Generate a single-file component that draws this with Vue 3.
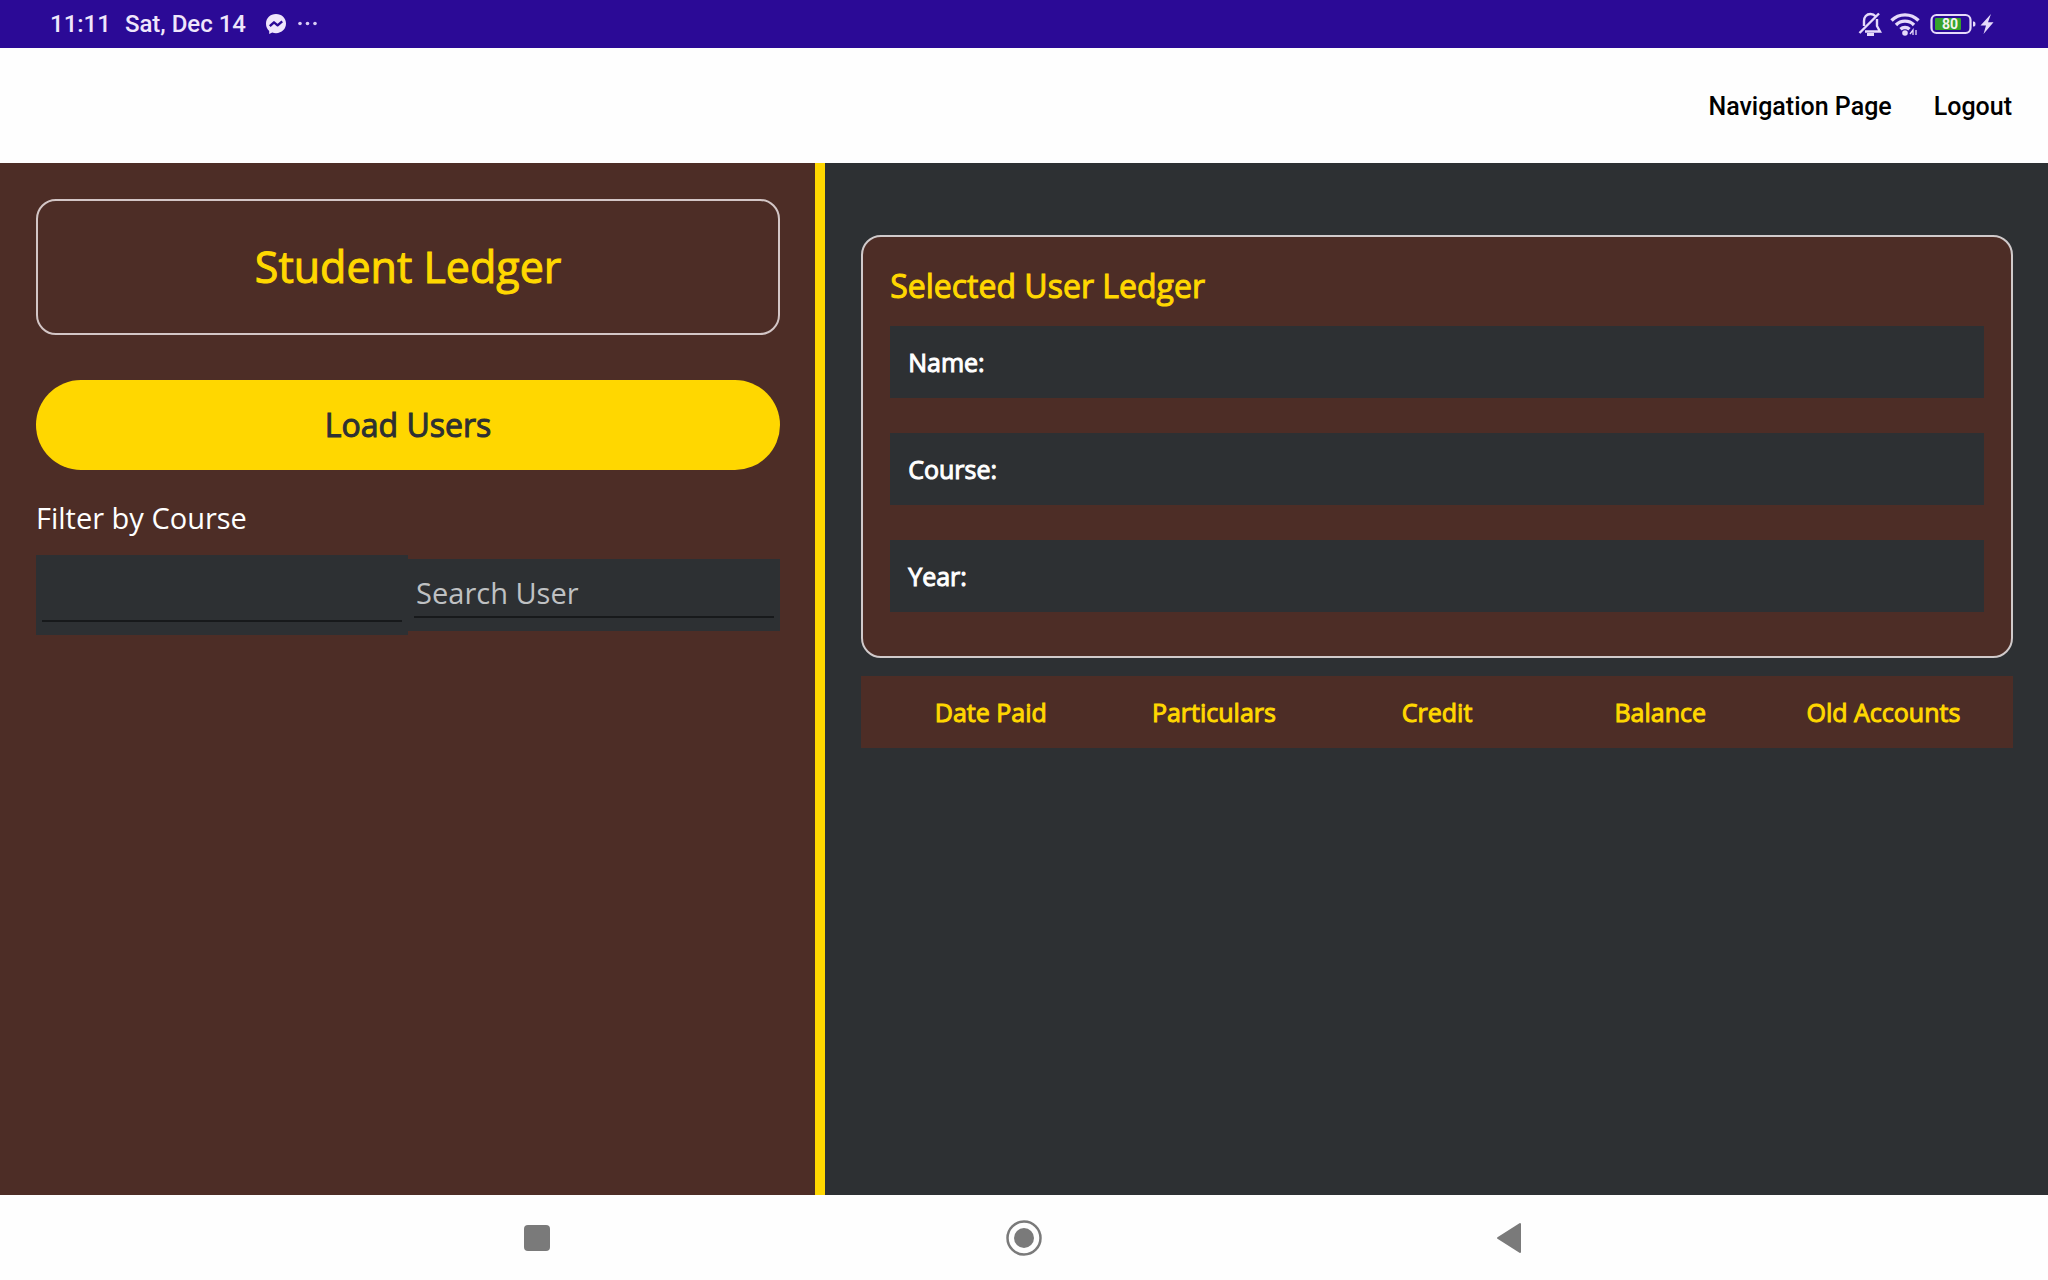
<script setup>
import { ref } from 'vue'

const course = ref('')
const search = ref('')
const fields = ['Name:', 'Course:', 'Year:']
const columns = ['Date Paid', 'Particulars', 'Credit', 'Balance', 'Old Accounts']
</script>

<template>
  <div class="screen">
    <header class="status">
      <span class="clock">11:11</span>
      <span class="date">Sat, Dec 14</span>
      <svg class="messenger" width="22" height="22" viewBox="0 0 22 22" aria-hidden="true">
        <path fill="#efe6fb" d="M11 1C5.200 1 1 5.100 1 10.700c0 3 1.200 5.500 3.200 7.300V21l3-1.400c1.200.4 2.500.6 3.800.6 5.800 0 10-4.100 10-9.600S16.800 1 11 1z" />
        <path fill="none" stroke="#2b0a96" stroke-width="2.400" stroke-linejoin="round" d="M4.800 13.200 9 9.300l3.600 3 4.600-4" />
      </svg>
      <svg class="dots" width="22" height="6" viewBox="0 0 22 6" fill="#d9cdf5" aria-hidden="true">
        <circle cx="3" cy="2.500" r="1.800" /><circle cx="10.500" cy="2.500" r="1.800" /><circle cx="18" cy="2.500" r="1.800" />
      </svg>
      <span class="spacer"></span>
      <svg class="bell" width="24" height="26" viewBox="0 0 24 26" fill="none" stroke="#e6dafa" stroke-width="2.400" aria-hidden="true">
        <path d="M17.500 5.200C16 3.400 14.500 3 12.500 3 8.500 3 6 6 6 10v5" />
        <path d="M19 8v7l3 5.500H7" />
        <path d="M1.500 22 21 2.500" />
        <path d="M9 23.500h7" stroke-width="3" />
      </svg>
      <svg class="wifi" width="30" height="26" viewBox="0 0 30 26" fill="none" stroke="#e6dafa" stroke-width="3.400" aria-hidden="true">
        <path d="M1.500 9.500a19 19 0 0 1 27 0" />
        <path d="M6 14a12.500 12.500 0 0 1 18 0" />
        <path d="M10.500 18.300a6.500 6.500 0 0 1 9 0" />
        <circle cx="15" cy="22" r="2.800" fill="#e6dafa" stroke="none" />
        <path d="m20 23 3-4v5M26 19v5" stroke-width="1.300" />
      </svg>
      <svg class="battery" width="46" height="22" viewBox="0 0 46 22" aria-hidden="true">
        <rect x="1.500" y="2" width="39" height="18" rx="5" fill="none" stroke="#e6dafa" stroke-width="2.200" />
        <rect x="5" y="5" width="26" height="12" rx="1" fill="#35a32b" />
        <path d="M43 8.500h1q1.500 0 1.500 2.500t-1.500 2.500h-1z" fill="#e6dafa" />
        <text x="20" y="16" text-anchor="middle" fill="#f4f4ee" font-family="Roboto, sans-serif" font-size="14" font-weight="700">80</text>
      </svg>
      <svg class="bolt" width="14" height="20" viewBox="0 0 14 20" fill="#e6dafa" aria-hidden="true">
        <path d="M11 0 .500 11.500h5.500L3.500 20 13.500 8.300H8z" />
      </svg>
    </header>

    <nav class="toolbar">
      <a href="#">Navigation Page</a>
      <a href="#">Logout</a>
    </nav>

    <main class="content">
      <section class="side">
        <div class="title-box"><h1>Student Ledger</h1></div>
        <button class="load" type="button">Load Users</button>
        <label class="filter-label" for="course">Filter by Course</label>
        <div class="filters">
          <div class="box tall">
            <select id="course" v-model="course"><option value=""></option></select>
          </div>
          <div class="box">
            <input v-model="search" type="text" placeholder="Search User" aria-label="Search User" />
          </div>
        </div>
      </section>
      <div class="divider"></div>
      <section class="detail">
        <div class="card">
          <h2>Selected User Ledger</h2>
          <p v-for="field in fields" :key="field" class="field">{{ field }}</p>
        </div>
        <div class="ledger">
          <table>
            <thead>
              <tr><th v-for="column in columns" :key="column" scope="col">{{ column }}</th></tr>
            </thead>
          </table>
        </div>
      </section>
    </main>

    <footer class="system">
      <button type="button" aria-label="Recent apps">
        <svg width="36" height="36" viewBox="0 0 36 36"><rect x="5" y="5" width="26" height="26" rx="4" fill="#7a7a7a" /></svg>
      </button>
      <button type="button" aria-label="Home">
        <svg width="36" height="36" viewBox="0 0 36 36"><circle cx="18" cy="18" r="16.500" fill="none" stroke="#7a7a7a" stroke-width="2.500" /><circle cx="18" cy="18" r="10" fill="#7a7a7a" /></svg>
      </button>
      <button type="button" aria-label="Back">
        <svg width="36" height="36" viewBox="0 0 36 36"><path d="M5 18 27 4v28z" fill="#7a7a7a" stroke="#7a7a7a" stroke-width="2" stroke-linejoin="round" /></svg>
      </button>
    </footer>
  </div>
</template>

<style>
body {
  margin: 0;
}
</style>

<style scoped>
.screen {
  display: flex;
  flex-direction: column;
  min-height: 100vh;
  background: #fefefe;
  font-family: "Open Sans", sans-serif;
}
.screen * {
  box-sizing: border-box;
}

.status {
  display: flex;
  align-items: center;
  height: 48px;
  padding: 0 54px 0 50px;
  background: #2b0a96;
  color: #efe6fb;
  font: 500 24px/48px Roboto, sans-serif;
}
.date {
  margin-left: 14px;
}
.messenger {
  margin-left: 19px;
}
.dots {
  margin-left: 10px;
}
.spacer {
  flex: 1;
}
.wifi {
  margin-left: 8px;
}
.battery {
  margin-left: 10px;
}
.bolt {
  margin-left: 4px;
}

.toolbar {
  display: flex;
  justify-content: flex-end;
  align-items: center;
  gap: 42px;
  height: 115px;
  padding: 2px 36px 0;
}
.toolbar a {
  color: #000;
  font: 500 25px/32px Roboto, sans-serif;
  text-decoration: none;
}

.content {
  flex: 1;
  display: grid;
  grid-template-columns: 2fr 10px 3fr;
  background: #2d3033;
}
.side {
  display: flex;
  flex-direction: column;
  padding: 36px 35px 36px 36px;
  background: #4d2d26;
}
.divider {
  background: #ffd700;
}

.title-box {
  padding: 34px 0;
  border: 2px solid #d3c6c6;
  border-radius: 20px;
}
h1,
h2,
p {
  margin: 0;
  font-weight: 400;
}
h1 {
  color: #ffd700;
  font-size: 43px;
  line-height: 64px;
  text-align: center;
  -webkit-text-stroke: 1px;
}
.load {
  height: 90px;
  margin-top: 45px;
  padding: 0;
  border: 0;
  border-radius: 45px;
  background: #ffd700;
  color: #2d3033;
  font: 400 32px/46px "Open Sans", sans-serif;
  -webkit-text-stroke: 1px;
}
.filter-label {
  margin-top: 28px;
  color: #fff;
  font-size: 29px;
  line-height: 40px;
}
.filters {
  display: grid;
  grid-template-columns: 1fr 1fr;
  align-items: center;
  margin-top: 17px;
}
.box {
  display: flex;
  height: 72px;
  padding: 10px 6px 13px;
  background: #2d3033;
}
.box.tall {
  height: 80px;
}
.box select,
.box input {
  appearance: none;
  width: 100%;
  min-width: 0;
  padding: 0 2px;
  border: 0;
  border-bottom: 2px solid #17191b;
  border-radius: 0;
  outline: 0;
  background: transparent;
  color: #fff;
  font: 400 29px/40px "Open Sans", sans-serif;
}
.box input::placeholder {
  color: #bfc1c3;
  opacity: 1;
}

.detail {
  padding: 72px 35px 36px 36px;
}
.card {
  display: flex;
  flex-direction: column;
  padding: 26px 27px 44px;
  border: 2px solid #d0cacb;
  border-radius: 20px;
  background: #4d2d26;
}
h2 {
  margin-bottom: 17px;
  color: #ffd700;
  font-size: 32px;
  line-height: 46px;
  -webkit-text-stroke: 1px;
}
.field {
  padding: 18px;
  background: #2d3033;
  color: #fff;
  font-size: 25px;
  line-height: 36px;
  -webkit-text-stroke: 1px;
}
.field + .field {
  margin-top: 35px;
}

.ledger {
  margin-top: 18px;
  padding: 0 18px;
  background: #4d2d26;
}
table {
  width: 100%;
  table-layout: fixed;
  border-collapse: collapse;
}
th {
  height: 72px;
  padding: 0;
  color: #ffd700;
  font-size: 25px;
  font-weight: 400;
  line-height: 36px;
  text-align: center;
  -webkit-text-stroke: 1px;
}

.system {
  display: flex;
  justify-content: center;
  height: 85px;
}
.system button {
  display: flex;
  align-items: center;
  justify-content: center;
  width: 23.8%;
  padding: 0;
  border: 0;
  background: transparent;
}
</style>
